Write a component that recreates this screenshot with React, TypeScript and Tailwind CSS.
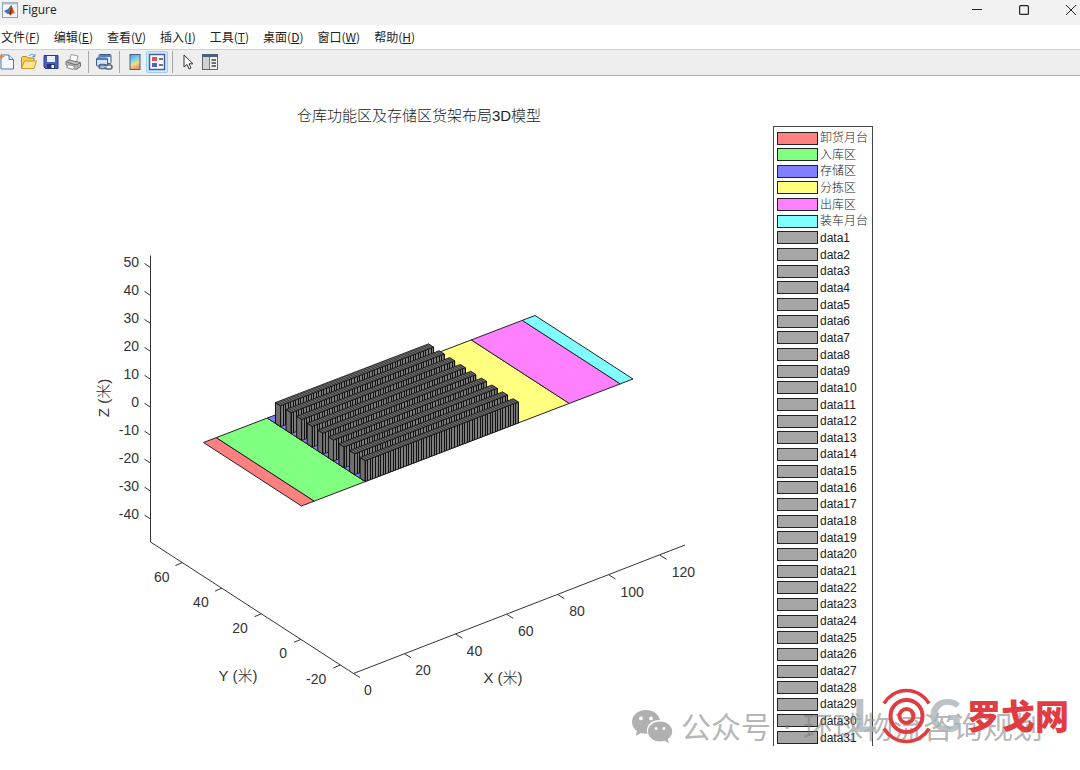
import React from "react";

type Point = [number, number];

const menus = [
  ["文件", "F"],
  ["编辑", "E"],
  ["查看", "V"],
  ["插入", "I"],
  ["工具", "T"],
  ["桌面", "D"],
  ["窗口", "W"],
  ["帮助", "H"],
];

const zones = [
  { name: "卸货月台", from: 0, to: 5, color: "#ff8080" },
  { name: "入库区", from: 5, to: 25, color: "#80ff80" },
  { name: "存储区", from: 25, to: 85, color: "#8080ff" },
  { name: "分拣区", from: 85, to: 105, color: "#ffff80" },
  { name: "出库区", from: 105, to: 125, color: "#ff80ff" },
  { name: "装车月台", from: 125, to: 130, color: "#80ffff" },
];

const legend = [
  ...zones.map((z) => ({ name: z.name, color: z.color })),
  ...Array.from({ length: 31 }, (_, i) => ({ name: `data${i + 1}`, color: "#a6a6a6" })),
];

const project = (x: number, y: number, z = 0): Point => [
  301.5 + 2.55 * x - 1.96 * y,
  506 - 0.977 * x - 1.27 * y - 2.75 * z,
];

const poly = (...pts: Point[]) => pts.map((p) => `${p[0].toFixed(2)},${p[1].toFixed(2)}`).join(" ");

function Shelf({ y }: { y: number }) {
  const h = 7.6;
  const d = 2.6;
  const cells = Array.from({ length: 61 }, (_, i) => 25 + i);
  const uprights = cells.map((x) => `M${project(x, y)}L${project(x, y, h)}`).join("");
  const tops = cells.map((x) => `M${project(x, y, h)}L${project(x, y + d, h)}`).join("");
  return (
    <g stroke="#111">
      <polygon fill="#6e6e6e" points={poly(project(25, y), project(25, y + d), project(25, y + d, h), project(25, y, h))} />
      <polygon fill="#7c7c7c" strokeWidth="0.8" points={poly(project(25, y), project(85, y), project(85, y, h), project(25, y, h))} />
      <polygon fill="#686868" strokeWidth="0.8" points={poly(project(25, y, h), project(85, y, h), project(85, y + d, h), project(25, y + d, h))} />
      <path d={uprights} shapeRendering="crispEdges" />
      <path d={tops} strokeWidth="0.7" strokeOpacity="0.8" />
    </g>
  );
}

function Chart() {
  const shelves = Array.from({ length: 9 }, (_, i) => 43.2 - i * 5.4);
  return (
    <svg viewBox="0 76 773 694" className="block h-auto min-w-0 flex-1" role="img" aria-label="仓库功能区及存储区货架布局3D模型">
      <g fontFamily="'Liberation Sans', 'Noto Sans CJK SC', sans-serif" fontSize="14" fill="#333">
        <text x="419" y="121" fontSize="15" fontWeight="300" textAnchor="middle" fill="#222">
          仓库功能区及存储区货架布局3D模型
        </text>
        {[50, 40, 30, 20, 10, 0, -10, -20, -30, -40].map((v, i) => (
          <g key={v}>
            <path d={`M150.5 ${267.5 + i * 27.95}l-6 -4`} stroke="#333" />
            <text x="139" y={267 + i * 27.95} textAnchor="end">{v}</text>
          </g>
        ))}
        {[60, 40, 20, 0, -20].map((v, i) => (
          <g key={v}>
            <path d={`M${182.5 + i * 39.5} ${562.5 + i * 25.6}l-7 3`} stroke="#333" />
            <text x={169.5 + i * 39.2} y={582 + i * 25.4} textAnchor="end">{v}</text>
          </g>
        ))}
        {[0, 20, 40, 60, 80, 100, 120].map((v, i) => (
          <g key={v}>
            <path d={`M${353.5 + i * 51.1} ${673.5 - i * 19.7}l6.500 4`} stroke="#333" />
            <text x={364 + i * 51.3} y={695 - i * 19.7}>{v}</text>
          </g>
        ))}
        <path d="M150.500 255.500V542L353.500 673.500L685 545" fill="none" stroke="#333" />
        <g fontSize="15" fontWeight="300" textAnchor="middle">
          <text x="503" y="683">X (米)</text>
          <text x="238" y="681">Y (米)</text>
          <text transform="translate(109 398) rotate(-90)">Z (米)</text>
        </g>
      </g>
      {zones.map((z) => (
        <polygon
          key={z.name}
          fill={z.color}
          stroke="#222"
          points={poly(project(z.from, 0), project(z.to, 0), project(z.to, 50), project(z.from, 50))}
        />
      ))}
      {shelves.map((y) => (
        <Shelf key={y} y={y} />
      ))}
    </svg>
  );
}

function ToolButton({ label, active = false, children }: { label: string; active?: boolean; children: React.ReactNode }) {
  return (
    <button
      aria-label={label}
      className={`flex size-[22px] shrink-0 items-center justify-center rounded-xs ${active ? "border border-[#99d1ff] bg-[#cce8ff]" : ""}`}
    >
      <svg viewBox="0 0 18 18" className="size-[18px] shrink-0">{children}</svg>
    </button>
  );
}

const Separator = () => <span className="mx-1 h-[22px] w-px shrink-0 bg-[#a8a8a8]" />;

function Toolbar() {
  return (
    <div className="flex h-[27px] items-center border-y border-t-[#cfcfcf] border-b-[#adadad] bg-[#eeeeee] pb-px">
      <div className="-ml-1 flex">
        <ToolButton label="新建">
          <path d="M3 2h8l4.500 4.500V16H3z" fill="#f6faff" stroke="#5078ae" />
          <path d="M11 2v4.500h4.500" fill="#cfe0f3" stroke="#5078ae" />
          <path d="M3.500 0l1 2.500 2.500 1-2.500 1-1 2.500-1-2.500-2.500-1 2.500-1z" fill="#ef8038" />
        </ToolButton>
        <ToolButton label="打开">
          <path d="M1.500 15.500V4.500l1-1h4l1.500 1.500h6v3" fill="#f2cc60" stroke="#b58a28" />
          <path d="M1.500 15.500L4.500 8h12L14 15.500z" fill="#ffe58c" stroke="#c79a2d" />
          <path d="M9 3c2-2.500 4-2 5.500 0M15 1v2.500h-2.500" fill="none" stroke="#5d91c6" />
        </ToolButton>
      </div>
      <ToolButton label="保存">
        <path d="M2 2.500h14v13H3.500L2 14z" fill="#4c5fbf" stroke="#2c3b91" />
        <path d="M5 3h8v6H5z" fill="#e7effb" />
        <path d="M5 11h8v4.500H5z" fill="#27357c" />
        <path d="M9.500 12h2.500v3H9.500z" fill="#fff" />
      </ToolButton>
      <ToolButton label="打印">
        <path d="M5.500 8L7 1.500l7 1.500-1.500 6" fill="#fff" stroke="#999" />
        <path d="M2 8.500l3-1.500 11.500 2.500v4L12 16.500 2 12z" fill="#bfbfbf" stroke="#777" />
        <path d="M2.500 9l9.500 3 4-2" stroke="#666" fill="none" />
        <path d="M4.500 11.500l6.500 2-2 3-6.500-2z" fill="#fafafa" stroke="#888" />
        <path d="M13 14l1.500-.8" stroke="#5a5" />
      </ToolButton>
      <Separator />
      <ToolButton label="链接绘图">
        <rect x="4" y="1.500" width="12" height="9" rx="1" fill="#e9f2fc" stroke="#395b8e" />
        <path d="M4.500 3h11" stroke="#547dba" strokeWidth="2" />
        <rect x="1.500" y="5" width="11" height="8" rx="1" fill="#d7e6f7" stroke="#395b8e" />
        <path d="M2 6h10" stroke="#547dba" strokeWidth="2" />
        <g fill="none" stroke="#526582" strokeWidth="1.500">
          <rect x="4" y="11.500" width="7" height="4" rx="2" />
          <rect x="10" y="12" width="7" height="4" rx="2" />
        </g>
        <path d="M8.500 13.700h4" stroke="#c8d3e2" />
      </ToolButton>
      <Separator />
      <ToolButton label="插入颜色栏">
        <defs>
          <linearGradient id="bar" x1="0" y1="0" x2="0.300" y2="1">
            <stop offset="0" stopColor="#668ddd" />
            <stop offset="0.400" stopColor="#73d5dd" />
            <stop offset="0.700" stopColor="#eadf92" />
            <stop offset="1" stopColor="#ee9b68" />
          </linearGradient>
        </defs>
        <rect x="4" y="1.500" width="10" height="15" fill="url(#bar)" stroke="#476091" />
      </ToolButton>
      <ToolButton label="插入图例" active>
        <rect x="1.500" y="1.500" width="15" height="15" fill="#f6f9fd" stroke="#425b92" strokeWidth="1.400" />
        <path d="M4 4h5v4H4z" fill="#e45050" />
        <path d="M4 10h5v4H4z" fill="#5060c5" />
        <path d="M11 6h4M11 12h4" stroke="#444" strokeWidth="1.300" />
      </ToolButton>
      <Separator />
      <ToolButton label="编辑绘图">
        <path d="M5 2v12l3-2.500 2 4.500 2-1-2-4.200h4z" fill="#fff" stroke="#333" />
      </ToolButton>
      <ToolButton label="打开属性检查器">
        <rect x="1.500" y="1.500" width="15" height="15" fill="#f1f1f1" stroke="#666" />
        <path d="M1 2.500h16" stroke="#46627f" strokeWidth="3" />
        <path d="M2 4h6v12H2z" fill="#d2d2d2" />
        <path d="M8.500 4v12" stroke="#777" />
        <path d="M10.500 7h4.500M10.500 10h4.500M10.500 13h4.500" stroke="#444" strokeWidth="1.300" />
      </ToolButton>
    </div>
  );
}

function TitleBar() {
  return (
    <header className="flex h-[25px] items-center justify-between bg-[#f2f2f2] pr-1 pb-[5px] pl-[2px]">
      <div className="flex items-center gap-1">
        <svg viewBox="0 0 16 16" className="size-4">
          <rect x=".5" y=".5" width="15" height="15" fill="#f3f6f8" stroke="#8fa3b5" />
          <path d="M1 1.500h14" stroke="#adc2d5" strokeWidth="2" />
          <path d="M2 9l4-2 3-4-2 8-1.500 1z" fill="#3e78a8" />
          <path d="M5.500 12C7.500 11 8 5 9.200 3c1.300 1.500 2.500 6.500 4.300 9-2-1.500-3-.8-5 1.500-.7-1-1.500-1.800-3-1.500z" fill="#d7592b" />
          <path d="M9.200 3c-.8 3-1.200 6.500-2.500 8.500 1 .2 1.500 1 1.800 2 1.500-2 1.500-7 .7-10.500z" fill="#8b2d1e" />
        </svg>
        <h1 className="font-['Open_Sans',sans-serif] text-xs text-[#222]">Figure</h1>
      </div>
      <div className="flex items-center gap-[37px]">
        <button aria-label="最小化" className="size-[10px]">
          <svg viewBox="0 0 10 10" className="size-full"><path d="M0 4.500h10" stroke="#222" /></svg>
        </button>
        <button aria-label="最大化" className="size-[10px]">
          <svg viewBox="0 0 10 10" className="size-full"><rect x=".6" y=".6" width="8.800" height="8.800" rx="1" fill="none" stroke="#222" strokeWidth="1.200" /></svg>
        </button>
        <button aria-label="关闭" className="size-[10px]">
          <svg viewBox="0 0 10 10" className="size-full"><path d="M0 0l10 10M10 0L0 10" stroke="#222" /></svg>
        </button>
      </div>
    </header>
  );
}

function Watermark() {
  return (
    <div className="absolute top-[629px] left-[631px] flex items-center gap-2 whitespace-nowrap text-[#787878]/55">
      <svg viewBox="0 0 42 36" className="h-9 w-[42px]" fill="#b0b0b0">
        <path fillRule="evenodd" d="M15 1C7 1 1 6 1 13c0 4 2 7 5 9l-1.500 5 5.500-3c2 .6 4 1 6.500.8C14 17 20 11 29 11 27.500 5 22 1 15 1zM10 7.500a1.900 1.900 0 1 1 0 3.800 1.900 1.900 0 0 1 0-3.800zm10 0a1.900 1.900 0 1 1 0 3.800 1.900 1.900 0 0 1 0-3.800z" />
        <path fillRule="evenodd" d="M29 12.500c-7 0-12 4.500-12 10s5 10 12 10c1.700 0 3.200-.2 4.600-.7L38 34l-1.200-4c2.700-1.800 4.400-4.500 4.400-7.500 0-5.500-5.200-10-12.200-10zm-4 5.500a1.500 1.500 0 1 1 0 3 1.500 1.500 0 0 1 0-3zm8 0a1.500 1.500 0 1 1 0 3 1.500 1.500 0 0 1 0-3z" />
      </svg>
      <p className="flex gap-3 font-['Noto_Sans','Noto_Sans_CJK_SC',sans-serif] text-[30px] leading-[44px]">
        <span>公众号</span>
        <span>·</span>
        <span>环球物流咨询规划</span>
      </p>
    </div>
  );
}

function Logo() {
  return (
    <svg viewBox="854 686 220 60" className="absolute top-[610px] left-[854px] h-[60px] w-[220px]">
      <g fontFamily="Lato, sans-serif" fontWeight="900" fontSize="45" fill="#aab3b8" fillOpacity=".8">
        <text x="853" y="732">L</text>
        <text x="929" y="732">G</text>
      </g>
      <g fill="none" stroke="#e03c41">
        <path d="M884 703.500A26 26 0 0 1 929 703.500M884 728.500A26 26 0 0 0 929 728.500" strokeWidth="3.500" />
        <circle cx="906.500" cy="716" r="16" strokeWidth="4" />
        <circle cx="906.500" cy="716" r="7" strokeWidth="4" />
      </g>
      <text x="967" y="729" fontFamily="'Noto Sans CJK SC', sans-serif" fontWeight="900" fontSize="34" fill="#e03c41">罗戈网</text>
    </svg>
  );
}

export default function App() {
  return (
    <div className="min-h-screen overflow-hidden bg-white">
      <TitleBar />
      <nav className="flex h-6 items-center gap-[14px] pl-px font-['Noto_Sans_CJK_SC',sans-serif] text-xs text-[#222]">
        {menus.map(([name, key]) => (
          <button key={key} className="whitespace-nowrap">
            {name}(<u>{key}</u>)
          </button>
        ))}
      </nav>
      <Toolbar />
      <main className="relative flex items-start pr-[207px]">
        <Chart />
        <ul className="mt-[50px] flex h-[620px] w-[100px] shrink-0 flex-col justify-between border-x border-t border-[#444] pt-[3px] pl-[3px] font-['Liberation_Sans','Noto_Sans_CJK_SC',sans-serif] text-xs leading-4 text-[#222]">
          {legend.map((item) => (
            <li key={item.name} className="flex h-4 items-center gap-[2px] whitespace-nowrap">
              <span className="h-[13px] w-[41px] border border-[#222]" style={{ backgroundColor: item.color }} />
              <span className="font-light">{item.name}</span>
            </li>
          ))}
        </ul>
        <Watermark />
        <Logo />
      </main>
    </div>
  );
}
